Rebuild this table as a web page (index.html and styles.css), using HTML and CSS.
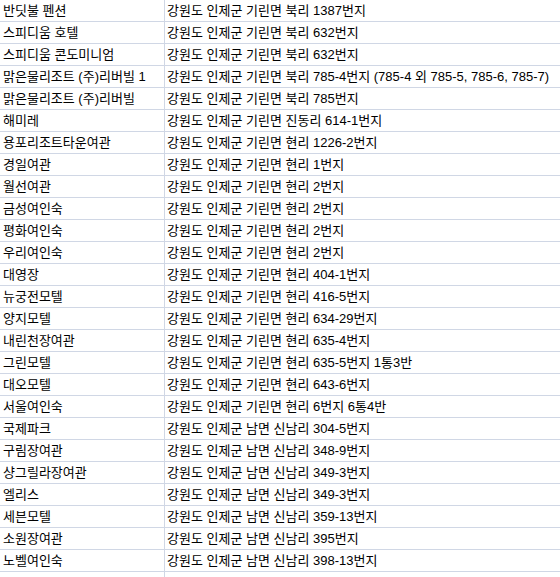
FILE: index.html
```html
<!DOCTYPE html>
<html lang="ko">
<head>
<meta charset="utf-8">
<title>숙박업소 목록</title>
<link rel="stylesheet" href="styles.css">
</head>
<body>
<div class="sheet">
  <div class="row"><div class="name">반딧불 펜션</div><div class="addr">강원도 인제군 기린면 북리 1387번지</div></div>
  <div class="row"><div class="name">스피디움 호텔</div><div class="addr">강원도 인제군 기린면 북리 632번지</div></div>
  <div class="row"><div class="name">스피디움 콘도미니엄</div><div class="addr">강원도 인제군 기린면 북리 632번지</div></div>
  <div class="row"><div class="name">맑은물리조트 (주)리버빌 1</div><div class="addr">강원도 인제군 기린면 북리 785-4번지 (785-4 외 785-5, 785-6, 785-7)</div></div>
  <div class="row"><div class="name">맑은물리조트 (주)리버빌</div><div class="addr">강원도 인제군 기린면 북리 785번지</div></div>
  <div class="row"><div class="name">해미레</div><div class="addr">강원도 인제군 기린면 진동리 614-1번지</div></div>
  <div class="row"><div class="name">용포리조트타운여관</div><div class="addr">강원도 인제군 기린면 현리 1226-2번지</div></div>
  <div class="row"><div class="name">경일여관</div><div class="addr">강원도 인제군 기린면 현리 1번지</div></div>
  <div class="row"><div class="name">월선여관</div><div class="addr">강원도 인제군 기린면 현리 2번지</div></div>
  <div class="row"><div class="name">금성여인숙</div><div class="addr">강원도 인제군 기린면 현리 2번지</div></div>
  <div class="row"><div class="name">평화여인숙</div><div class="addr">강원도 인제군 기린면 현리 2번지</div></div>
  <div class="row"><div class="name">우리여인숙</div><div class="addr">강원도 인제군 기린면 현리 2번지</div></div>
  <div class="row"><div class="name">대영장</div><div class="addr">강원도 인제군 기린면 현리 404-1번지</div></div>
  <div class="row"><div class="name">뉴궁전모텔</div><div class="addr">강원도 인제군 기린면 현리 416-5번지</div></div>
  <div class="row"><div class="name">양지모텔</div><div class="addr">강원도 인제군 기린면 현리 634-29번지</div></div>
  <div class="row"><div class="name">내린천장여관</div><div class="addr">강원도 인제군 기린면 현리 635-4번지</div></div>
  <div class="row"><div class="name">그린모텔</div><div class="addr">강원도 인제군 기린면 현리 635-5번지 1통3반</div></div>
  <div class="row"><div class="name">대오모텔</div><div class="addr">강원도 인제군 기린면 현리 643-6번지</div></div>
  <div class="row"><div class="name">서울여인숙</div><div class="addr">강원도 인제군 기린면 현리 6번지 6통4반</div></div>
  <div class="row"><div class="name">국제파크</div><div class="addr">강원도 인제군 남면 신남리 304-5번지</div></div>
  <div class="row"><div class="name">구림장여관</div><div class="addr">강원도 인제군 남면 신남리 348-9번지</div></div>
  <div class="row"><div class="name">샹그릴라장여관</div><div class="addr">강원도 인제군 남면 신남리 349-3번지</div></div>
  <div class="row"><div class="name">엘리스</div><div class="addr">강원도 인제군 남면 신남리 349-3번지</div></div>
  <div class="row"><div class="name">세븐모텔</div><div class="addr">강원도 인제군 남면 신남리 359-13번지</div></div>
  <div class="row"><div class="name">소원장여관</div><div class="addr">강원도 인제군 남면 신남리 395번지</div></div>
  <div class="row"><div class="name">노벨여인숙</div><div class="addr">강원도 인제군 남면 신남리 398-13번지</div></div>
  <div class="row"><div class="name"></div><div class="addr"></div></div>
</div>
</body>
</html>
```
FILE: styles.css
```css
html, body {
  margin: 0;
  padding: 0;
  background: #ffffff;
}
body {
  width: 560px;
  height: 577px;
  overflow: hidden;
  font-family: "Liberation Sans", "Noto Sans CJK KR", sans-serif;
  font-size: 13px;
  color: #000000;
}
.sheet {
  display: flex;
  flex-direction: column;
}
.row {
  display: flex;
  height: 21px;
  border-bottom: 1px solid #d0d7e5;
  flex-shrink: 0;
}
.name {
  width: 161px;
  padding-left: 3px;
  border-right: 1px solid #d0d7e5;
  line-height: 21px;
  white-space: nowrap;
  overflow: hidden;
  flex-shrink: 0;
}
.addr {
  flex: 1;
  padding-left: 2px;
  line-height: 21px;
  white-space: nowrap;
}
```
